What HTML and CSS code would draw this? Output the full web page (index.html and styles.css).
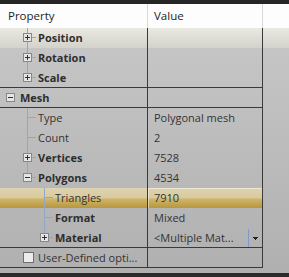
FILE: index.html
```html
<!DOCTYPE html>
<html>
<head>
<meta charset="utf-8">
<link rel="stylesheet" href="styles.css">
</head>
<body>
<div class="panel">
  <div class="topbar"></div>
  <div class="header">
    <div class="c-name"><span class="htext">Property</span></div>
    <div class="c-val"><span class="htext">Value</span></div>
    <div class="c-rest"></div>
  </div>
  <div class="body">
    <div class="row hot">
      <div class="c-name">
        <svg class="g1" width="38" height="20"><path d="M27.5 0V20M32 9.5H36" class="ln"/><rect x="23.5" y="5.5" width="8" height="8" class="bx"/><path d="M25 9.5H30M27.5 7V12" class="pm"/></svg>
        <span class="lbl b">Position</span>
      </div>
      <div class="c-val"></div>
      <div class="c-rest"></div>
    </div>
    <div class="row">
      <div class="c-name">
        <svg width="38" height="20"><path d="M27.5 0V20M32 9.5H36" class="ln"/><rect x="23.5" y="5.5" width="8" height="8" class="bx"/><path d="M25 9.5H30M27.5 7V12" class="pm"/></svg>
        <span class="lbl b">Rotation</span>
      </div>
      <div class="c-val"></div>
      <div class="c-rest"></div>
    </div>
    <div class="row sep">
      <div class="c-name">
        <svg width="38" height="20"><path d="M27.5 0V5M32 9.5H36" class="ln"/><rect x="23.5" y="5.5" width="8" height="8" class="bx"/><path d="M25 9.5H30M27.5 7V12" class="pm"/></svg>
        <span class="lbl b">Scale</span>
      </div>
      <div class="c-val"></div>
      <div class="c-rest"></div>
    </div>
    <div class="row sep">
      <div class="c-name">
        <svg width="20" height="20"><rect x="6.5" y="5.5" width="8" height="8" class="bx"/><path d="M8 9.5H13" class="pm"/></svg>
        <span class="lbl b">Mesh</span>
      </div>
      <div class="c-val"></div>
      <div class="c-rest"></div>
    </div>
    <div class="row">
      <div class="c-name">
        <svg width="38" height="20"><path d="M27.5 0V20M28 9.5H36" class="ln"/></svg>
        <span class="lbl">Type</span>
      </div>
      <div class="c-val"><span class="vtext">Polygonal mesh</span></div>
      <div class="c-rest"></div>
    </div>
    <div class="row">
      <div class="c-name">
        <svg width="38" height="20"><path d="M27.5 0V20M28 9.5H36" class="ln"/></svg>
        <span class="lbl">Count</span>
      </div>
      <div class="c-val"><span class="vtext">2</span></div>
      <div class="c-rest"></div>
    </div>
    <div class="row">
      <div class="c-name">
        <svg width="38" height="20"><path d="M27.5 0V20M32 9.5H36" class="ln"/><rect x="23.5" y="5.5" width="8" height="8" class="bx"/><path d="M25 9.5H30M27.5 7V12" class="pm"/></svg>
        <span class="lbl b">Vertices</span>
      </div>
      <div class="c-val"><span class="vtext">7528</span></div>
      <div class="c-rest"></div>
    </div>
    <div class="row">
      <div class="c-name">
        <svg width="38" height="20"><path d="M27.5 0V5M32 9.5H36" class="ln"/><rect x="23.5" y="5.5" width="8" height="8" class="bx"/><path d="M25 9.5H30" class="pm"/></svg>
        <span class="lbl b">Polygons</span>
      </div>
      <div class="c-val"><span class="vtext">4534</span></div>
      <div class="c-rest"></div>
    </div>
    <div class="row sel">
      <div class="c-name">
        <svg width="55" height="20"><path d="M44.5 0V20M45 9.5H53" class="ln"/></svg>
        <span class="lbl">Triangles</span>
      </div>
      <div class="c-val"><span class="vtext">7910</span></div>
      <div class="c-rest"></div>
    </div>
    <div class="row">
      <div class="c-name">
        <svg width="55" height="20"><path d="M44.5 0V20M45 9.5H53" class="ln"/></svg>
        <span class="lbl b">Format</span>
      </div>
      <div class="c-val"><span class="vtext">Mixed</span></div>
      <div class="c-rest"></div>
    </div>
    <div class="row sep">
      <div class="c-name">
        <svg width="55" height="20"><path d="M44.5 0V5M49 9.5H53" class="ln"/><rect x="40.5" y="5.5" width="8" height="8" class="bx"/><path d="M42 9.5H47M44.5 7V12" class="pm"/></svg>
        <span class="lbl b">Material</span>
      </div>
      <div class="c-val">
        <span class="vtext grow">&lt;Multiple Mat...</span>
        <span class="dd"><svg width="5" height="3"><path d="M0 0H5V1H4V2H3V3H2V2H1V1H0Z" fill="#222"/></svg></span>
      </div>
      <div class="c-rest"></div>
    </div>
    <div class="row sep">
      <div class="c-name">
        <svg width="38" height="20"><rect x="23.5" y="4.5" width="10" height="10" class="cb"/></svg>
        <span class="lbl">User-Defined opti...</span>
      </div>
      <div class="c-val"></div>
      <div class="c-rest"></div>
    </div>
    <div class="filler"></div>
  </div>
  <div class="bottombar"></div>
</div>
</body>
</html>
```

FILE: styles.css
```css
* { box-sizing: border-box; }
html, body { margin: 0; padding: 0; }
body {
  width: 289px;
  height: 277px;
  overflow: hidden;
  font-family: "Open Sans", "Noto Sans", sans-serif;
  font-size: 11px;
  color: #2a2a2a;
  background: #2d2d2d;
}
.panel {
  display: flex;
  flex-direction: column;
  height: 277px;
}
.topbar {
  height: 4px;
  background: #262626;
  flex: none;
}
.bottombar {
  height: 4px;
  background: #2b2b2b;
  flex: none;
}
.header {
  display: flex;
  height: 24px;
  background: #fdfdfd;
  flex: none;
}
.header .c-name { border-right: 1px solid #d8d8d8; }
.header .c-val { border-right: 1px solid #d8d8d8; }
.htext {
  line-height: 24px;
  font-size: 11.5px;
  color: #1e1e1e;
}
.header .c-name .htext { padding-left: 8px; }
.header .c-val .htext { padding-left: 6px; }
.c-name {
  width: 148px;
  flex: none;
  display: flex;
  align-items: flex-start;
  height: 20px;
}
.header .c-name, .header .c-val { height: 24px; }
.c-val {
  width: 115px;
  flex: none;
  display: flex;
  align-items: flex-start;
  height: 20px;
}
.c-rest { flex: 1; }
.body {
  flex: 1;
  display: flex;
  flex-direction: column;
  background: linear-gradient(#c7c7c7, #b0b0b0);
}
.row {
  display: flex;
  height: 20px;
  flex: none;
}
.row .c-name { border-right: 1px solid #3a3a3a; }
.row .c-val { border-right: 1px solid #3a3a3a; }
.row.sep .c-name, .row.sep .c-val { border-bottom: 1px solid #3a3a3a; }
.row.hot { background: linear-gradient(#e9e9e2, #d3d3cc); }
.row.sel .c-name, .row.sel .c-val {
  background: linear-gradient(#ded3b0 0%, #d9cb9e 48%, #cfb66c 55%, #b8963c 100%);
}
.row.sel .c-val { box-shadow: inset 1px 1px 0 rgba(255,255,255,0.45); }
.filler { flex: 1; }
svg { display: block; flex: none; }
.ln { stroke: #93a7c3; stroke-width: 1; fill: none; }
.bx { fill: #e6e6e6; stroke: #878787; stroke-width: 1; }
.pm { stroke: #303030; stroke-width: 1; fill: none; }
.cb { fill: #ececec; stroke: #6e6e6e; stroke-width: 1; }
.lbl {
  line-height: 19px;
  white-space: nowrap;
  color: #333;
}
.lbl.b { font-weight: 700; color: #2e2e2e; }
.vtext {
  line-height: 19px;
  padding-left: 6px;
  white-space: nowrap;
  color: #333;
}
.grow { flex: 1; overflow: hidden; }
.dd {
  width: 14px;
  height: 18px;
  margin-top: 1px;
  border-left: 1px solid #7f9bc9;
  display: flex;
  justify-content: center;
  padding-top: 8px;
  flex: none;
}
```
